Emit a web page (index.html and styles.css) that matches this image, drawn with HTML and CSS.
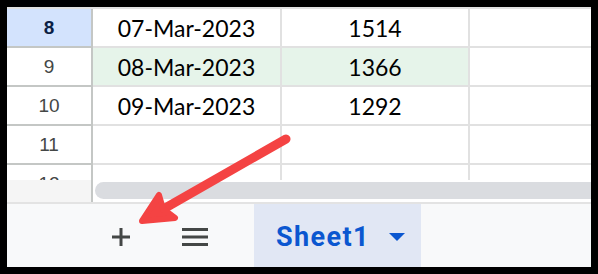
FILE: index.html
```html
<!DOCTYPE html>
<html lang="en">
<head>
    <meta charset="UTF-8">
    <title>Sheet1</title>
    <link rel="stylesheet" href="styles.css">
</head>
<body>
    <div class="frame">
        <!-- grid rows -->
        <div class="grid">
            <div class="row row-sel">
                <div class="rh">8</div>
                <div class="cell">07-Mar-2023</div>
                <div class="cell">1514</div>
                <div class="cell"></div>
            </div>
            <div class="row row-hl">
                <div class="rh">9</div>
                <div class="cell">08-Mar-2023</div>
                <div class="cell">1366</div>
                <div class="cell"></div>
            </div>
            <div class="row">
                <div class="rh">10</div>
                <div class="cell">09-Mar-2023</div>
                <div class="cell">1292</div>
                <div class="cell"></div>
            </div>
            <div class="row">
                <div class="rh">11</div>
                <div class="cell"></div>
                <div class="cell"></div>
                <div class="cell"></div>
            </div>
            <div class="row">
                <div class="rh">12</div>
                <div class="cell"></div>
                <div class="cell"></div>
                <div class="cell"></div>
            </div>
        </div>

        <!-- horizontal scrollbar -->
        <div class="hscroll">
            <div class="hs-corner"></div>
            <div class="hs-track"><div class="hs-thumb"></div></div>
        </div>

        <!-- sheet tabs -->
        <div class="tabs">
            <div class="tab-btn">
                <svg width="20" height="20" viewBox="0 0 20 20"><path d="M10 1v18M1 10h18" stroke="#444746" stroke-width="3" fill="none"/></svg>
            </div>
            <div class="tab-btn tab-menu">
                <svg width="28" height="20" viewBox="0 0 28 20"><path d="M1 2.5h26M1 10h26M1 17.5h26" stroke="#444746" stroke-width="3" fill="none"/></svg>
            </div>
            <div class="tab">
                <span class="tab-name">Sheet1</span>
                <svg width="16" height="8" viewBox="0 0 16 8"><path d="M0 0h16L8 8z" fill="#0b57d0"/></svg>
            </div>
        </div>
    </div>

    <!-- red arrow -->
    <svg class="arrow" width="598" height="274" viewBox="0 0 598 274">
        <path d="M286 139L160 211" stroke="#f44343" stroke-width="9" stroke-linecap="round"/>
        <path d="M142 221L159 195L163 209L175 218Z" fill="#f44343" stroke="#f44343" stroke-width="6" stroke-linejoin="round"/>
    </svg>
</body>
</html>
```

FILE: styles.css
```css
body, html {
    margin: 0;
    padding: 0;
}

body {
    background: #000;
    width: 598px;
    height: 274px;
    position: relative;
    overflow: hidden;
}

.frame {
    margin: 7px;
    width: 584px;
    height: 260px;
    background: #fff;
    display: flex;
    flex-direction: column;
}

/* grid */
.grid {
    height: 173px;
    overflow: hidden;
    border-top: 2px solid #e1e1e1;
    box-sizing: border-box;
}

.row {
    display: grid;
    grid-template-columns: 86px 189px 188px 1fr;
    height: 39px;
}

.rh, .cell {
    display: flex;
    align-items: center;
    justify-content: center;
    border-bottom: 2px solid #e1e1e1;
    border-right: 2px solid #e1e1e1;
}

.rh {
    font-family: "Liberation Sans", Arial, sans-serif;
    font-size: 19px;
    color: #444746;
    border-color: #c4c7c5;
}

.cell {
    font-family: Lato, sans-serif;
    font-size: 23px;
    color: #000;
}

.cell:last-child {
    border-right: 0;
}

.row-sel .rh {
    background: #d3e3fd;
    color: #0b1f45;
    font-weight: bold;
}

.row-hl .cell:nth-child(2),
.row-hl .cell:nth-child(3) {
    background: #e6f4ea;
}

/* scrollbar */
.hscroll {
    height: 24px;
    display: flex;
    border-bottom: 2px solid #e3e3e3;
    box-sizing: border-box;
}

.hs-corner {
    width: 84px;
    background: #f5f5f5;
    border-right: 2px solid #c4c7c5;
}

.hs-track {
    flex: 1;
    padding: 2px 0 0 2px;
}

.hs-thumb {
    height: 17px;
    background: #dadce0;
    border-radius: 9px 0 0 9px;
}

/* tabs */
.tabs {
    flex: 1;
    background: #f8f9fa;
    display: flex;
    align-items: center;
    padding-left: 94px;
}

.tab-btn {
    width: 40px;
    height: 40px;
    display: flex;
    align-items: center;
    justify-content: center;
    margin-top: 3px;
}

.tab-menu {
    margin-left: 34px;
}

.tab {
    margin-left: 39px;
    height: 100%;
    width: 167px;
    box-sizing: border-box;
    padding: 3px 0 0 22px;
    background: #e1e7f4;
    display: flex;
    align-items: center;
    gap: 19px;
}

.tab-name {
    font-family: Roboto, sans-serif;
    font-weight: bold;
    font-size: 27px;
    letter-spacing: 1.4px;
    color: #0b57d0;
}

.arrow {
    position: absolute;
    left: 0;
    top: 0;
    pointer-events: none;
}
```
